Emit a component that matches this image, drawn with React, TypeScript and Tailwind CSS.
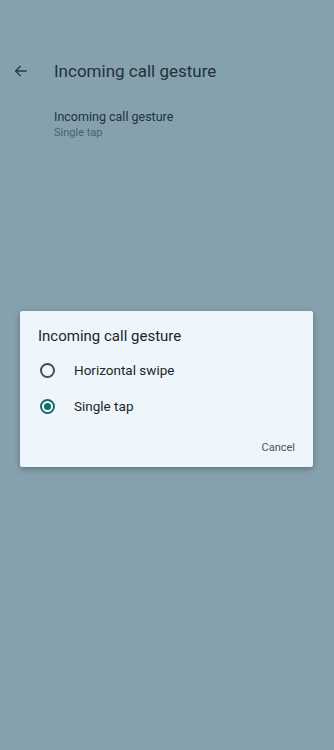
import React from "react";

function BackArrow() {
  return (
    <svg width="16" height="16" viewBox="0 0 24 24" fill="none" stroke="#2b3a42" strokeWidth="2" strokeLinecap="round" strokeLinejoin="round">
      <path d="M20 12H4" />
      <path d="M11 5l-7 7 7 7" />
    </svg>
  );
}

function Radio({ checked }: { checked?: boolean }) {
  return (
    <span
      className={
        "flex h-[15px] w-[15px] items-center justify-center rounded-full border-2 " +
        (checked ? "border-[#136b6a]" : "border-[#444d52]")
      }
    >
      {checked && <span className="h-[7px] w-[7px] rounded-full bg-[#136b6a]" />}
    </span>
  );
}

export default function App() {
  const options = [
    { label: "Horizontal swipe", checked: false },
    { label: "Single tap", checked: true },
  ];

  return (
    <div
      className="relative h-[750px] w-[334px] overflow-hidden bg-[#86a1ae]"
      style={{ fontFamily: "Roboto, 'Noto Sans', sans-serif" }}
    >
      <div className="flex items-center pt-[60px]">
        <div className="flex w-[54px] justify-start pl-[13px]">
          <BackArrow />
        </div>
        <h1 className="text-[17px] leading-[22px] text-[#22323a]">Incoming call gesture</h1>
      </div>

      <div className="pl-[54px] pt-[27px]">
        <p className="text-[12.5px] leading-[16px] text-[#22323a]">Incoming call gesture</p>
        <p className="text-[11px] leading-[16px] text-[#4c616c]">Single tap</p>
      </div>

      <div className="absolute left-[20px] top-[311px] w-[293px] rounded-[2px] bg-[#eef6fb] shadow-[0_2px_6px_rgba(0,0,0,0.3)]">
        <h2 className="px-[18px] pt-[15px] text-[15px] leading-[20px] text-[#1d2529]">Incoming call gesture</h2>
        <div className="mt-[6px] flex flex-col">
          {options.map((o) => (
            <div key={o.label} className="flex h-[36px] items-center pl-[20px]">
              <Radio checked={o.checked} />
              <span className="ml-[19px] text-[13.5px] text-[#1d2529]">{o.label}</span>
            </div>
          ))}
        </div>
        <div className="flex justify-end pr-[18px] pt-[17px] pb-[12px]">
          <span className="text-[11px] leading-[14px] text-[#3c5a60]">Cancel</span>
        </div>
      </div>
    </div>
  );
}
